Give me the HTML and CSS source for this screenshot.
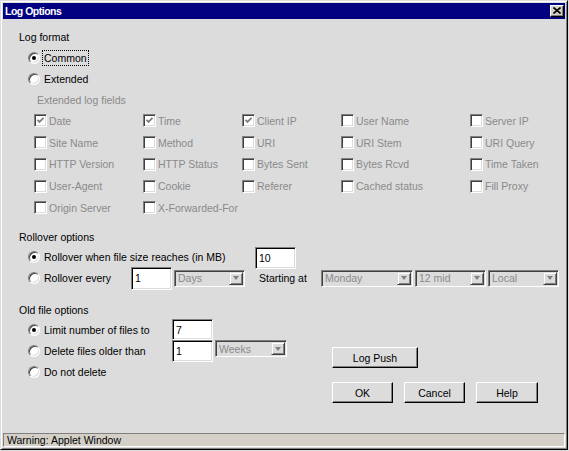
FILE: index.html
```html
<!DOCTYPE html>
<html>
<head>
<meta charset="utf-8">
<title>Log Options</title>
<link rel="stylesheet" href="styles.css">
</head>
<body>
<div class="window">
  <div class="titlebar">
    <span class="title">Log Options</span>
    <span class="close"><svg width="8" height="7" viewBox="0 0 8 7"><path d="M0.5 0.5 L7.5 6.5 M7.5 0.5 L0.5 6.5" stroke="#000" stroke-width="1.6" fill="none"/></svg></span>
  </div>
  <div class="content">
    <div class="row heading">Log format</div>
    <div class="row opt-row"><span class="radio on"></span><span class="label focus">Common</span></div>
    <div class="row opt-row"><span class="radio"></span><span class="label">Extended</span></div>
    <div class="row sub-heading">Extended log fields</div>
    <div class="cb-grid">
      <div class="cb-cell"><span class="check on"><svg width="9" height="9" viewBox="0 0 9 9"><path d="M1.5 3.8 L3.5 5.8 L7.5 1.8" stroke="#808080" stroke-width="1.9" fill="none"/></svg></span><span class="cb-label">Date</span></div>
      <div class="cb-cell"><span class="check on"><svg width="9" height="9" viewBox="0 0 9 9"><path d="M1.5 3.8 L3.5 5.8 L7.5 1.8" stroke="#808080" stroke-width="1.9" fill="none"/></svg></span><span class="cb-label">Time</span></div>
      <div class="cb-cell"><span class="check on"><svg width="9" height="9" viewBox="0 0 9 9"><path d="M1.5 3.8 L3.5 5.8 L7.5 1.8" stroke="#808080" stroke-width="1.9" fill="none"/></svg></span><span class="cb-label">Client IP</span></div>
      <div class="cb-cell"><span class="check"></span><span class="cb-label">User Name</span></div>
      <div class="cb-cell"><span class="check"></span><span class="cb-label">Server IP</span></div>

      <div class="cb-cell"><span class="check"></span><span class="cb-label">Site Name</span></div>
      <div class="cb-cell"><span class="check"></span><span class="cb-label">Method</span></div>
      <div class="cb-cell"><span class="check"></span><span class="cb-label">URI</span></div>
      <div class="cb-cell"><span class="check"></span><span class="cb-label">URI Stem</span></div>
      <div class="cb-cell"><span class="check"></span><span class="cb-label">URI Query</span></div>

      <div class="cb-cell"><span class="check"></span><span class="cb-label">HTTP Version</span></div>
      <div class="cb-cell"><span class="check"></span><span class="cb-label">HTTP Status</span></div>
      <div class="cb-cell"><span class="check"></span><span class="cb-label">Bytes Sent</span></div>
      <div class="cb-cell"><span class="check"></span><span class="cb-label">Bytes Rcvd</span></div>
      <div class="cb-cell"><span class="check"></span><span class="cb-label">Time Taken</span></div>

      <div class="cb-cell"><span class="check"></span><span class="cb-label">User-Agent</span></div>
      <div class="cb-cell"><span class="check"></span><span class="cb-label">Cookie</span></div>
      <div class="cb-cell"><span class="check"></span><span class="cb-label">Referer</span></div>
      <div class="cb-cell"><span class="check"></span><span class="cb-label">Cached status</span></div>
      <div class="cb-cell"><span class="check"></span><span class="cb-label">Fill Proxy</span></div>

      <div class="cb-cell"><span class="check"></span><span class="cb-label">Origin Server</span></div>
      <div class="cb-cell"><span class="check"></span><span class="cb-label">X-Forwarded-For</span></div>
    </div>

    <div class="row heading h-roll">Rollover options</div>
    <div class="row opt-row roll-1">
      <div class="opt w-size"><span class="radio on"></span><span class="label">Rollover when file size reaches (in MB)</span></div>
      <div class="field h22">10</div>
    </div>
    <div class="row opt-row roll-2">
      <div class="opt w-every"><span class="radio"></span><span class="label">Rollover every</span></div>
      <div class="field h23">1</div>
      <div class="select w-days"><span class="sel-text">Days</span><span class="sel-btn"><span class="tri"></span></span></div>
      <span class="starting">Starting at</span>
      <div class="select w-monday"><span class="sel-text">Monday</span><span class="sel-btn"><span class="tri"></span></span></div>
      <div class="select w-mid"><span class="sel-text">12 mid</span><span class="sel-btn"><span class="tri"></span></span></div>
      <div class="select w-local"><span class="sel-text">Local</span><span class="sel-btn"><span class="tri"></span></span></div>
    </div>

    <div class="old">
      <div class="old-left">
        <div class="row heading h-old">Old file options</div>
        <div class="row opt-row">
          <div class="opt w-old"><span class="radio on"></span><span class="label">Limit number of files to</span></div>
          <div class="field h21">7</div>
        </div>
        <div class="row opt-row">
          <div class="opt w-old"><span class="radio"></span><span class="label">Delete files older than</span></div>
          <div class="field h22">1</div>
          <div class="select w-weeks"><span class="sel-text">Weeks</span><span class="sel-btn"><span class="tri"></span></span></div>
        </div>
        <div class="row opt-row">
          <div class="opt"><span class="radio"></span><span class="label">Do not delete</span></div>
        </div>
      </div>
      <div class="old-right">
        <div class="btn w-push">Log Push</div>
        <div class="btn-row">
          <div class="btn w-ok">OK</div>
          <div class="btn w-ok">Cancel</div>
          <div class="btn w-help">Help</div>
        </div>
      </div>
    </div>
  </div>
  <div class="statusbar">Warning: Applet Window</div>
</div>
</body>
</html>
```
FILE: styles.css
```css
html, body {
  margin: 0;
  padding: 0;
  background: #dcdcdc;
}
body {
  width: 569px;
  height: 451px;
  overflow: hidden;
  font-family: "Liberation Sans", Arial, sans-serif;
  font-size: 10.5px;
  color: #000;
}
.window {
  box-sizing: border-box;
  width: 568px;
  height: 450px;
  border: 1px solid;
  border-color: #dcdcdc #000 #000 #dcdcdc;
  box-shadow: inset 1px 1px #fff, inset -1px -1px #808080;
  padding: 2px;
  display: flex;
  flex-direction: column;
  background: #dcdcdc;
}
.titlebar {
  height: 16px;
  background: #000080;
  display: flex;
  align-items: center;
  justify-content: space-between;
  padding: 0 1px 0 2px;
  flex: none;
}
.title {
  color: #fff;
  font-weight: bold;
  font-size: 10.5px;
  letter-spacing: -0.5px;
}
.close {
  box-sizing: border-box;
  width: 14px;
  height: 12px;
  background: #d4d0c8;
  border: 1px solid;
  border-color: #fff #000 #000 #fff;
  box-shadow: inset -1px -1px #808080;
  display: flex;
  align-items: center;
  justify-content: center;
}
.close svg { display: block; margin: 0 0 1px 0; }
.content {
  flex: 1;
  padding: 7px 0 0 16px;
}
.row {
  display: flex;
  align-items: center;
  height: 21px;
  white-space: nowrap;
}
.opt-row { padding-left: 9px; }
.sub-heading {
  padding-left: 18px;
  color: #8a8a8a;
}
.radio {
  box-sizing: border-box;
  width: 12px;
  height: 12px;
  border-radius: 50%;
  border: 1px solid;
  border-color: #808080 #fff #fff #808080;
  background: #fff;
  box-shadow: inset 1px 1px #404040, inset -1px -1px #dcdcdc;
  display: flex;
  align-items: center;
  justify-content: center;
  flex: none;
}
.radio.on::after {
  content: "";
  width: 4px;
  height: 4px;
  border-radius: 50%;
  background: #000;
}
.label {
  margin-left: 2px;
  padding: 1px 1px;
  border: 1px solid transparent;
}
.label.focus { border: 1px dotted #000; }
.cb-grid {
  margin-left: 15px;
  display: grid;
  grid-template-columns: 109px 99px 99px 129px 80px;
  grid-auto-rows: 21.75px;
}
.cb-cell {
  display: flex;
  align-items: center;
  white-space: nowrap;
}
.check {
  box-sizing: border-box;
  width: 13px;
  height: 13px;
  border: 1px solid;
  border-color: #808080 #fff #fff #808080;
  box-shadow: inset 1px 1px #404040, inset -1px -1px #dcdcdc;
  background: #fff;
  display: flex;
  align-items: center;
  justify-content: center;
  flex: none;
}
.check svg { display: block; }
.cb-label {
  margin-left: 2px;
  color: #8a8a8a;
}
.h-roll { margin-top: 8.75px; height: 19px; }
.opt {
  display: flex;
  align-items: center;
  height: 21px;
}
.w-size { width: 227px; }
.w-every { width: 103px; }
.w-old { width: 144px; }
.field {
  box-sizing: border-box;
  width: 41px;
  border: 1px solid;
  border-color: #808080 #fff #fff #808080;
  box-shadow: inset 1px 1px #000, inset -1px -1px #dcdcdc;
  background: #fff;
  padding: 0 0 0 3px;
  display: flex;
  align-items: center;
  flex: none;
}
.h21 { height: 21px; }
.h22 { height: 22px; }
.h23 { height: 23px; }
.roll-1 .field { margin-top: 2px; }
.select {
  box-sizing: border-box;
  height: 17px;
  border: 1px solid;
  border-color: #808080 #fff #fff #808080;
  box-shadow: inset 1px 1px #404040;
  background: #dcdcdc;
  display: flex;
  align-items: center;
  justify-content: space-between;
  padding: 1px 1px 1px 3px;
  margin-left: 2px;
  color: #8a8a8a;
  flex: none;
}
.sel-btn {
  box-sizing: border-box;
  width: 14px;
  height: 13px;
  background: #dcdcdc;
  border: 1px solid;
  border-color: #dcdcdc #404040 #404040 #dcdcdc;
  box-shadow: inset 1px 1px #fff, inset -1px -1px #808080;
  display: flex;
  align-items: center;
  justify-content: center;
}
.tri {
  width: 0;
  height: 0;
  border-left: 3.5px solid transparent;
  border-right: 3.5px solid transparent;
  border-top: 4px solid #808080;
}
.w-days { width: 71px; }
.w-monday { width: 92px; }
.w-mid { width: 71px; margin-left: 2px; }
.w-local { width: 71px; margin-left: 2px; }
.w-weeks { width: 72px; margin-top: -4px; }
.starting {
  margin-left: 14px;
  width: 60px;
}
.old {
  display: flex;
  margin-top: 11.5px;
}
.old-left { width: 313px; }
.h-old { height: 19px; }
.old-right {
  padding-top: 47px;
  display: flex;
  flex-direction: column;
}
.btn {
  box-sizing: border-box;
  height: 21px;
  background: #dcdcdc;
  border: 1px solid;
  border-color: #fff #000 #000 #fff;
  box-shadow: inset -1px -1px #808080;
  display: flex;
  align-items: center;
  justify-content: center;
}
.w-push { width: 86px; }
.btn-row {
  display: flex;
  gap: 11px;
  margin-top: 14px;
}
.w-ok { width: 61px; }
.w-help { width: 62px; }
.statusbar {
  box-sizing: border-box;
  height: 14px;
  flex: none;
  background: #d4d0c8;
  border: 1px solid;
  border-color: #808080 #fff #fff #808080;
  padding-left: 3px;
  display: flex;
  align-items: center;
  white-space: nowrap;
}
```
